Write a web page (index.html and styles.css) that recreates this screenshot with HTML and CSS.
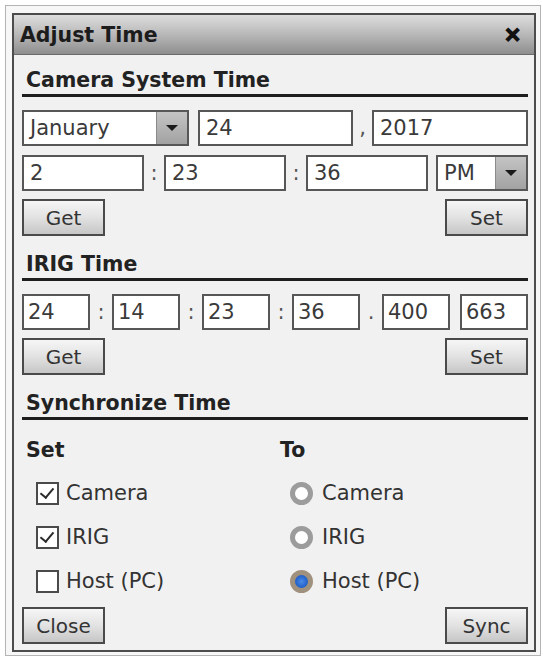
FILE: index.html
```html
<!DOCTYPE html>
<html lang="en">

<head>
    <meta charset="UTF-8">
    <meta name="viewport" content="width=device-width, initial-scale=1.0">
    <title>Adjust Time</title>
    <link rel="stylesheet" href="styles.css">
</head>

<body>
    <div class="frame">
        <div class="dialog">
            <div class="titlebar">
                <span class="title">Adjust Time</span>
                <span class="close">&#x2715;</span>
            </div>

            <div class="content">
                <div class="section first">Camera System Time</div>

                <div class="row">
                    <div class="select month">
                        <span class="value">January</span>
                        <span class="arrow"></span>
                    </div>
                    <div class="field day">24</div>
                    <span class="sep">,</span>
                    <div class="field year">2017</div>
                </div>

                <div class="row">
                    <div class="field hour">2</div>
                    <span class="sep">:</span>
                    <div class="field minute">23</div>
                    <span class="sep">:</span>
                    <div class="field second">36</div>
                    <div class="select ampm">
                        <span class="value">PM</span>
                        <span class="arrow"></span>
                    </div>
                </div>

                <div class="actions">
                    <button>Get</button>
                    <button>Set</button>
                </div>

                <div class="section">IRIG Time</div>

                <div class="row irig">
                    <div class="field">24</div>
                    <span class="sep">:</span>
                    <div class="field">14</div>
                    <span class="sep">:</span>
                    <div class="field">23</div>
                    <span class="sep">:</span>
                    <div class="field">36</div>
                    <span class="sep">.</span>
                    <div class="field">400</div>
                    <div class="field last">663</div>
                </div>

                <div class="actions">
                    <button>Get</button>
                    <button>Set</button>
                </div>

                <div class="section">Synchronize Time</div>

                <div class="sync">
                    <div class="column">
                        <div class="label">Set</div>
                        <label class="option"><span class="check on"></span>Camera</label>
                        <label class="option"><span class="check on"></span>IRIG</label>
                        <label class="option"><span class="check"></span>Host (PC)</label>
                    </div>
                    <div class="column">
                        <div class="label">To</div>
                        <label class="option"><span class="radio"></span>Camera</label>
                        <label class="option"><span class="radio"></span>IRIG</label>
                        <label class="option"><span class="radio on"></span>Host (PC)</label>
                    </div>
                </div>

                <div class="actions bottom">
                    <button>Close</button>
                    <button>Sync</button>
                </div>
            </div>
        </div>
    </div>
</body>

</html>
```

FILE: styles.css
```css
html, body {
    height: 100%;
}

body {
    margin: 0;
    padding: 5px 0 0 5px;
    background-color: #fff;
    color: #222;
    font-family: "DejaVu Sans", sans-serif;
    box-sizing: border-box;
}

.frame {
    width: 536px;
    height: 651px;
    box-sizing: border-box;
    border: 1px solid #b4b4b4;
    background-color: #f7f7f7;
    padding: 7px 4px 3px 6px;
}

.dialog {
    height: 100%;
    box-sizing: border-box;
    border: 2px solid #4c4c4c;
    background-color: #f1f1f1;
    display: flex;
    flex-direction: column;
}

.titlebar {
    height: 39px;
    flex-shrink: 0;
    display: flex;
    align-items: center;
    justify-content: space-between;
    padding: 0 13px 0 6px;
    border-bottom: 1px solid #6a6a6a;
    background: linear-gradient(#dedede, #b4b4b4 55%, #8e8e8e);
}

.title {
    font-size: 20.5px;
    font-weight: bold;
    color: #1c1c1c;
}

.close {
    font-size: 20px;
    font-weight: bold;
    color: #111;
    -webkit-text-stroke: 2px #111;
}

.content {
    flex: 1;
    padding: 0 6px 0 8px;
    display: flex;
    flex-direction: column;
}

.section {
    font-size: 20.5px;
    font-weight: bold;
    line-height: 24px;
    padding: 16px 0 0 4px;
    margin-bottom: 5px;
    border-bottom: 3px solid #1e1e1e;
    padding-bottom: 2px;
}

.section.first {
    padding-top: 13px;
}

.row {
    display: flex;
    align-items: center;
    height: 36px;
    margin-top: 9px;
}

.section + .row {
    margin-top: 8px;
}

.field,
.select {
    height: 36px;
    box-sizing: border-box;
    border: 2px solid #575757;
    background-color: #fff;
    font-size: 21px;
    line-height: 32px;
    padding: 0 6px;
    color: #3a3a3a;
}

.sep {
    font-size: 21px;
    color: #555;
    text-align: center;
}

.select {
    display: flex;
    padding: 0 0 0 6px;
}

.select .value {
    flex: 1;
}

.arrow {
    width: 30px;
    border-left: 1px solid #8a8a8a;
    background: linear-gradient(#c4c4c4, #a2a2a2);
    display: flex;
    align-items: center;
    justify-content: center;
}

.arrow::after {
    content: "";
    border-left: 6px solid transparent;
    border-right: 6px solid transparent;
    border-top: 6px solid #1a1a1a;
}

.month {
    width: 167px;
}

.day {
    width: 155px;
    margin-left: 9px;
}

.year {
    width: 156px;
}

.row .sep {
    flex: 1;
}

.hour {
    width: 122px;
}

.minute {
    width: 122px;
}

.second {
    width: 122px;
}

.ampm {
    width: 92px;
    margin-left: 8px;
}

.irig .field {
    width: 68px;
    padding: 0 4px;
}

.irig .field.last {
    margin-left: 10px;
}

.actions {
    display: flex;
    justify-content: space-between;
    margin-top: 8px;
}

button {
    width: 83px;
    height: 37px;
    box-sizing: border-box;
    border: 2px solid #4a4a4a;
    background: linear-gradient(#f6f6f6, #e2e2e2 50%, #c6c6c6);
    font-family: "DejaVu Sans", sans-serif;
    font-size: 20px;
    color: #333;
    padding: 0;
}

.sync {
    display: flex;
    padding-left: 4px;
}

.column {
    display: flex;
    flex-direction: column;
}

.column:first-child {
    width: 254px;
}

.label {
    font-size: 20.5px;
    font-weight: bold;
    line-height: 24px;
    margin-top: 13px;
    margin-bottom: 9px;
}

.option {
    display: flex;
    align-items: center;
    height: 44px;
    font-size: 21px;
    color: #333;
}

.check {
    width: 23px;
    height: 23px;
    box-sizing: border-box;
    border: 2px solid #4a4a4a;
    background-color: #fff;
    margin: 0 7px 0 10px;
    position: relative;
}

.check.on::after {
    content: "";
    position: absolute;
    left: 5px;
    top: 1px;
    width: 6px;
    height: 11px;
    border-right: 2.5px solid #2a2a2a;
    border-bottom: 2.5px solid #2a2a2a;
    transform: rotate(40deg);
}

.radio {
    width: 23px;
    height: 23px;
    box-sizing: border-box;
    border-radius: 50%;
    border: 5px solid #9c9c9c;
    background-color: #fff;
    margin: 0 9px 0 10px;
}

.radio.on {
    border-color: #a0917f;
    background: radial-gradient(circle, #4a8ae6 0, #1f5fc8 70%);
}

.bottom {
    margin-top: auto;
    margin-bottom: 6px;
}
```
